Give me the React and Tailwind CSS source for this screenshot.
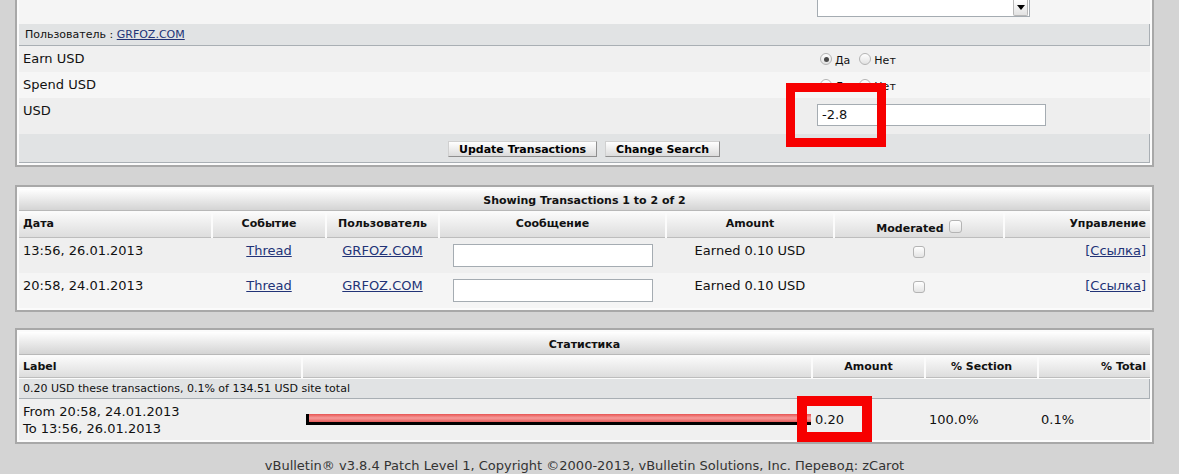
import React from 'react';

const Radio = ({ checked }) => (
  <span className="mx-[3px] inline-flex h-[12px] w-[12px] items-center justify-center rounded-full border border-[#b4b4b4] bg-linear-to-b from-white to-[#e2e2e2]">
    {checked && <span className="h-[5px] w-[5px] rounded-full bg-[#4a4a4a]" />}
  </span>
);

const Check = ({ className = '' }) => (
  <span className={`inline-block h-[12px] w-[12px] rounded-[3px] border border-[#b4b4b4] bg-linear-to-b from-white to-[#e4e4e4] ${className}`} />
);

const Button = ({ children }) => (
  <button className="h-[16px] border border-[#d0d0d0] border-r-[#8f8f8f] border-b-[#8f8f8f] bg-linear-to-b from-white to-[#dcdcdc] px-[10px] text-[11px] font-bold leading-[13px] text-black">
    {children}
  </button>
);

const Link = ({ children }) => <a className="text-[#223377] underline">{children}</a>;

const YesNo = () => (
  <div className="flex items-center text-[11px]">
    <Radio checked />
    <span className="mt-[5px]">Да</span>
    <span className="ml-[6px]" />
    <Radio />
    <span className="mt-[5px]">Нет</span>
  </div>
);

const txCols = 'grid grid-cols-[192px_112px_111px_225px_166px_168px_1fr] gap-x-[2px]';
const statCols = 'grid grid-cols-[282px_508px_111px_111px_1fr] gap-x-[2px]';

const rows = [
  { date: '13:56, 26.01.2013', bg: 'bg-[#efefef]' },
  { date: '20:58, 24.01.2013', bg: 'bg-[#f5f5f5]' },
];

export default function App() {
  return (
    <div className="relative min-h-[474px] overflow-hidden bg-[#d4d4d4] pl-[15px] font-['DejaVu_Sans',Verdana,sans-serif] text-[#111]">
      {/* search panel */}
      <div className="w-[1139px] border-2 border-t-0 border-[#a8a8a8] bg-[#fbfbfb] px-[2px] pb-[2px]">
        <div className="grid h-[24px] grid-cols-[792px_1fr] gap-x-[2px] bg-[#f5f5f5]">
          <div />
          <div className="pl-[4px]">
            <div className="flex h-[17px] w-[213px] justify-end border border-t-0 border-[#a5acb2] bg-white pr-[1px]">
              <span className="flex h-[16px] w-[15px] items-center justify-center rounded-b-[2px] border border-t-0 border-[#b8b8b8] bg-linear-to-b from-white to-[#e2e2e2]">
                <span className="h-0 w-0 border-x-[4px] border-t-[5px] border-x-transparent border-t-black" />
              </span>
            </div>
          </div>
        </div>
        <div className="flex h-[22px] items-center border-r border-b border-[#a9afb4] bg-[#e1e3e4] px-[6px] pt-[2px] text-[11px]">
          <span>Пользователь :&nbsp;</span>
          <Link>GRFOZ.COM</Link>
        </div>
        <div className="grid h-[26px] grid-cols-[792px_1fr] gap-x-[2px] bg-[#f0f0f0] text-[13px]">
          <div className="pl-[4px] pt-[5px] leading-[16px]">Earn USD</div>
          <div className="flex items-center pl-[4px]"><YesNo /></div>
        </div>
        <div className="grid h-[26px] grid-cols-[792px_1fr] gap-x-[2px] bg-[#f6f6f6] text-[13px]">
          <div className="pl-[4px] pt-[5px] leading-[16px]">Spend USD</div>
          <div className="flex items-center pl-[4px]"><YesNo /></div>
        </div>
        <div className="grid h-[36px] grid-cols-[792px_1fr] gap-x-[2px] bg-[#eeeeee] text-[13px]">
          <div className="pl-[4px] pt-[5px] leading-[16px]">USD</div>
          <div className="pl-[4px] pt-[6px]">
            <div className="flex h-[22px] w-[229px] items-center border border-[#a5acb2] bg-white pl-[4px]">-2.8</div>
          </div>
        </div>
        <div className="flex h-[29px] items-center justify-center gap-[8px] border-r border-b border-[#a9afb4] bg-[#e1e3e4] pt-[2px]">
          <Button>Update Transactions</Button>
          <Button>Change Search</Button>
        </div>
      </div>

      {/* transactions */}
      <div className="mt-[18px] w-[1139px] border-2 border-[#a8a8a8] bg-[#fbfbfb] p-[2px]">
        <div className="flex h-[22px] items-center justify-center border-b border-[#b8b8b8] bg-linear-to-b from-white to-[#d4d4d4] pt-[3px] text-[11px] font-bold">
          Showing Transactions 1 to 2 of 2
        </div>
        <div className={`${txCols} mt-[2px] h-[25px] text-[11px] font-bold leading-[14px]`}>
          {[
            ['Дата', 'justify-start pl-[4px]'],
            ['Событие', 'justify-center'],
            ['Пользователь', 'justify-center'],
            ['Сообщение', 'justify-center'],
            ['Amount', 'justify-center'],
          ].map(([t, c]) => (
            <div key={t} className={`flex items-start border-b border-[#bdbdbd] bg-linear-to-b from-[#fafafa] to-[#dddddd] pt-[4px] ${c}`}>{t}</div>
          ))}
          <div className="flex items-end justify-center border-b border-[#bdbdbd] bg-linear-to-b from-[#fafafa] to-[#dddddd] pb-[2px]">
            <span className="leading-[13px]">Moderated</span>
            <Check className="mb-[2px] ml-[5px] h-[13px] w-[13px]" />
          </div>
          <div className="flex items-start justify-end border-b border-[#bdbdbd] bg-linear-to-b from-[#fafafa] to-[#dddddd] pr-[4px] pt-[4px]">Управление</div>
        </div>
        {rows.map((r) => (
          <div key={r.date} className={`${txCols} h-[35px] text-[13px] leading-[16px] ${r.bg}`}>
            <div className="pl-[4px] pt-[5px]">{r.date}</div>
            <div className="pt-[5px] text-center"><Link>Thread</Link></div>
            <div className="pt-[5px] text-center"><Link>GRFOZ.COM</Link></div>
            <div className="flex justify-center pt-[6px]">
              <div className="h-[23px] w-[200px] border border-[#a5acb2] bg-white" />
            </div>
            <div className="pt-[5px] text-center">Earned 0.10 USD</div>
            <div className="flex justify-center pt-[8px]"><Check /></div>
            <div className="pr-[4px] pt-[5px] text-right"><Link>[Ссылка]</Link></div>
          </div>
        ))}
      </div>

      {/* statistics */}
      <div className="mt-[16px] w-[1139px] border-2 border-[#a8a8a8] bg-[#fbfbfb] p-[2px]">
        <div className="flex h-[23px] items-center justify-center border-b border-[#b8b8b8] bg-linear-to-b from-white to-[#d4d4d4] pt-[4px] text-[11px] font-bold">
          Статистика
        </div>
        <div className={`${statCols} mt-[2px] h-[21px] text-[11px] font-bold`}>
          {[
            ['Label', 'justify-start pl-[4px]'],
            ['', ''],
            ['Amount', 'justify-center'],
            ['% Section', 'justify-center'],
            ['% Total', 'justify-end pr-[4px]'],
          ].map(([t, c], i) => (
            <div key={i} className={`flex items-center border-b border-[#bdbdbd] bg-linear-to-b from-[#fafafa] to-[#dddddd] pt-[1px] ${c}`}>{t}</div>
          ))}
        </div>
        <div className="mt-[1px] flex h-[20px] items-center border-r border-b border-[#a9afb4] bg-[#e1e3e4] px-[4px] pt-[1px] text-[11px]">
          0.20 USD these transactions, 0.1% of 134.51 USD site total
        </div>
        <div className={`${statCols} h-[41px] bg-[#f0f0f0] text-[13px] leading-[17px]`}>
          <div className="flex flex-col justify-center pl-[4px]">
            <span>From 20:58, 24.01.2013</span>
            <span>To 13:56, 26.01.2013</span>
          </div>
          <div className="flex items-center pl-[3px]">
            <div className="h-[11px] w-[506px] border-b-[3px] border-l-[3px] border-black bg-linear-to-b from-[#e65252] via-[#f59a9a] to-[#e65a5a]" />
          </div>
          <div className="flex items-center pl-[2px]">0.20</div>
          <div className="flex items-center pl-[3px]">100.0%</div>
          <div className="flex items-center pl-[2px]">0.1%</div>
        </div>
      </div>

      <div className="mt-[14px] w-[1139px] text-center text-[13px] leading-[16px] text-[#333]">
        vBulletin® v3.8.4 Patch Level 1, Copyright ©2000-2013, vBulletin Solutions, Inc. Перевод: zCarot
      </div>

      {/* annotation frames */}
      <div className="absolute left-[786px] top-[83px] h-[64px] w-[100px] border-[9px] border-[#f70000]" />
      <div className="absolute left-[797px] top-[396px] h-[46px] w-[75px] border-[10px] border-[#f70000]" />
    </div>
  );
}
